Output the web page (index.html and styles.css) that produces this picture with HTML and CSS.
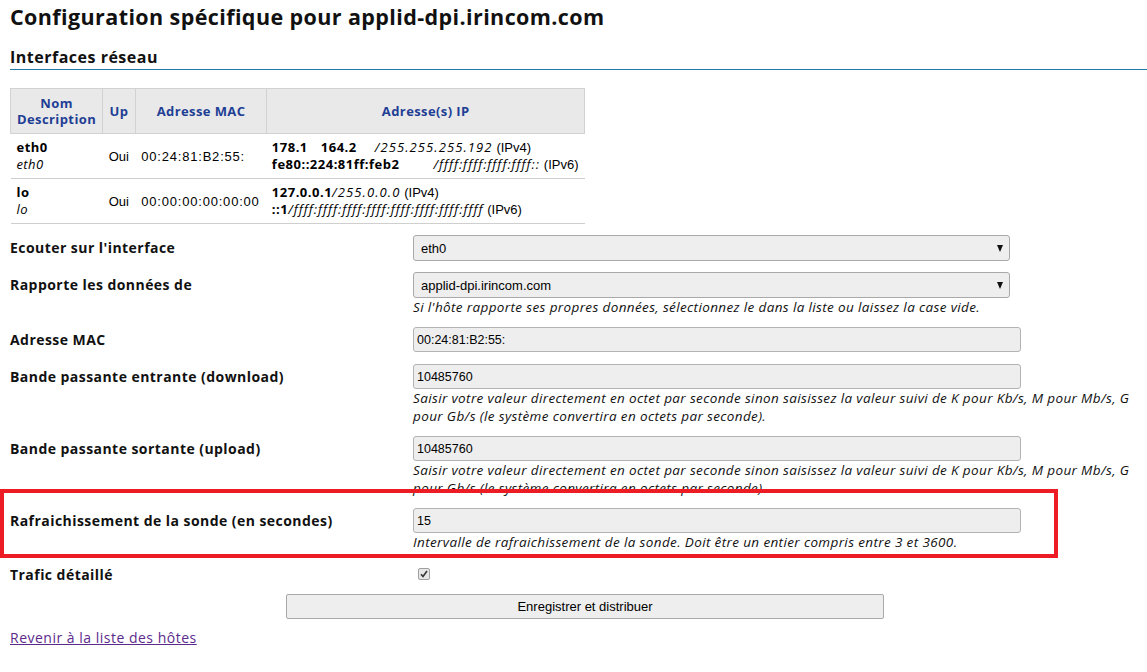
FILE: index.html
```html
<!DOCTYPE html>
<html lang="fr">
<head>
<meta charset="utf-8">
<title>Configuration spécifique</title>
<link rel="stylesheet" href="styles.css">
</head>
<body>
<div class="page">
<h1 class="title">Configuration spécifique pour applid-dpi.irincom.com</h1>
<h2 class="section">Interfaces réseau</h2>

<table class="ifaces">
  <thead>
    <tr>
      <th class="c-name">Nom<br>Description</th>
      <th class="c-up">Up</th>
      <th class="c-mac">Adresse MAC</th>
      <th class="c-ip">Adresse(s) IP</th>
    </tr>
  </thead>
  <tbody>
    <tr>
      <td class="c-name"><b>eth0</b><br><i>eth0</i></td>
      <td class="c-up arial">Oui</td>
      <td class="c-mac arial mac">00:24:81:B2:55:</td>
      <td class="c-ip"><b>178.1<span class="gap g1"></span>164.2<span class="gap g2"></span></b><i>/255.255.255.192</i> <span class="arial">(IPv4)</span><br><b>fe80::224:81ff:feb2<span class="gap g3"></span></b><i class="cond">/ffff:ffff:ffff:ffff::</i> <span class="arial">(IPv6)</span></td>
    </tr>
    <tr>
      <td class="c-name"><b>lo</b><br><i>lo</i></td>
      <td class="c-up arial">Oui</td>
      <td class="c-mac arial mac">00:00:00:00:00:00</td>
      <td class="c-ip"><b>127.0.0.1</b><i>/255.0.0.0</i> <span class="arial">(IPv4)</span><br><b>::1</b><i class="cond">/ffff:ffff:ffff:ffff:ffff:ffff:ffff:ffff</i> <span class="arial">(IPv6)</span></td>
    </tr>
  </tbody>
</table>

<form class="form">
  <div class="row">
    <label class="lbl">Ecouter sur l'interface</label>
    <div class="field">
      <span class="select-wrap"><select class="select"><option>eth0</option></select></span>
    </div>
  </div>
  <div class="row">
    <label class="lbl">Rapporte les données de</label>
    <div class="field">
      <span class="select-wrap"><select class="select"><option>applid-dpi.irincom.com</option></select></span>
      <p class="help">Si l'hôte rapporte ses propres données, sélectionnez le dans la liste ou laissez la case vide.</p>
    </div>
  </div>
  <div class="row">
    <label class="lbl">Adresse MAC</label>
    <div class="field">
      <input class="text" type="text" value="00:24:81:B2:55:">
    </div>
  </div>
  <div class="row">
    <label class="lbl">Bande passante entrante (download)</label>
    <div class="field">
      <input class="text" type="text" value="10485760">
      <p class="help">Saisir votre valeur directement en octet par seconde sinon saisissez la valeur suivi de K pour Kb/s, M pour Mb/s, G pour Gb/s (le système convertira en octets par seconde).</p>
    </div>
  </div>
  <div class="row">
    <label class="lbl">Bande passante sortante (upload)</label>
    <div class="field">
      <input class="text" type="text" value="10485760">
      <p class="help">Saisir votre valeur directement en octet par seconde sinon saisissez la valeur suivi de K pour Kb/s, M pour Mb/s, G pour Gb/s (le système convertira en octets par seconde).</p>
    </div>
  </div>
  <div class="row">
    <label class="lbl">Rafraichissement de la sonde (en secondes)</label>
    <div class="field">
      <input class="text" type="text" value="15">
      <p class="help">Intervalle de rafraichissement de la sonde. Doit être un entier compris entre 3 et 3600.</p>
    </div>
  </div>
  <div class="row row-check">
    <label class="lbl">Trafic détaillé</label>
    <div class="field">
      <span class="check"><svg width="8" height="8" viewBox="0 0 8 8"><path d="M1 4.3 L3 6.5 L7 1" fill="none" stroke="#333" stroke-width="1.6"/></svg></span>
    </div>
  </div>
  <div class="actions">
    <button type="button" class="btn">Enregistrer et distribuer</button>
  </div>
</form>

<a class="back" href="#">Revenir à la liste des hôtes</a>
</div>

<div class="highlight"></div>
</body>
</html>
```

FILE: styles.css
```css
html {
  background: #fff;
}
body {
  margin: 0;
  font-family: "Open Sans", "DejaVu Sans", sans-serif;
  font-size: 13px;
  letter-spacing: 0.4px;
  color: #000;
  position: relative;
  width: 1147px;
  height: 672px;
  overflow: hidden;
}
.page {
  padding-left: 10px;
}
.title {
  margin: 0;
  font-size: 21.5px;
  line-height: 34px;
  font-weight: 700;
  color: #111;
  letter-spacing: 0.4px;
}
.section {
  margin: 12px 0 0 0;
  font-size: 16px;
  line-height: 22px;
  font-weight: 700;
  color: #111;
  letter-spacing: 0.5px;
  padding-bottom: 1px;
  border-bottom: 1px solid #2279a6;
}
.ifaces {
  margin-top: 18px;
  border-collapse: collapse;
  width: 575px;
  font-size: 13px;
}
.ifaces th {
  background: #e9e9e9;
  border: 1px solid #d2d2d2;
  color: #1f3f95;
  font-weight: 700;
  line-height: 16px;
  height: 44px;
  padding: 0 6px;
  text-align: center;
}
.ifaces td {
  border-bottom: 1px solid #cfcfcf;
  line-height: 17px;
  height: 44px;
  padding: 0 6px;
  vertical-align: middle;
  white-space: nowrap;
}
.ifaces th.c-name { width: 78px; }
.ifaces th.c-up { width: 20px; }
.ifaces th.c-mac { width: 120px; }
.ifaces td.c-ip { padding-left: 5px; }
.ifaces b { font-weight: 700; letter-spacing: 0.5px; }
.ifaces td.c-ip i { letter-spacing: 1.1px; }
.ifaces td.c-ip i.cond { letter-spacing: 0.95px; }
.arial {
  font-family: "Liberation Sans", Arial, sans-serif;
  font-size: 13px;
  letter-spacing: 0;
}
.mac {
  letter-spacing: 0.8px;
}
.gap { display: inline-block; }
.g1 { width: 13px; }
.g2 { width: 18px; }
.g3 { width: 34px; }

.form {
  margin-top: 11px;
  display: flex;
  flex-direction: column;
  gap: 11px;
}
.row {
  display: grid;
  grid-template-columns: 403px 1fr;
  align-items: start;
}
.lbl {
  font-weight: 700;
  font-size: 14px;
  line-height: 26px;
  color: #111;
  letter-spacing: 0.45px;
}
.field {
  display: flex;
  flex-direction: column;
  align-items: flex-start;
}
.select-wrap {
  position: relative;
  display: block;
  width: 597px;
}
.select-wrap::after {
  content: "";
  position: absolute;
  right: 7px;
  top: 10px;
  border-left: 3.5px solid transparent;
  border-right: 3.5px solid transparent;
  border-top: 7px solid #111;
  pointer-events: none;
}
.select {
  appearance: none;
  -webkit-appearance: none;
  display: block;
  width: 597px;
  height: 26px;
  box-sizing: border-box;
  border: 1px solid #a9a9a9;
  border-radius: 3px;
  background: #eee;
  font-family: "Liberation Sans", Arial, sans-serif;
  font-size: 13px;
  letter-spacing: 0;
  color: #000;
  padding: 0 7px;
  margin: 0;
}
.text {
  display: block;
  width: 608px;
  height: 25px;
  box-sizing: border-box;
  border: 1px solid #b3b3b3;
  border-radius: 3px;
  background: #eee;
  font-family: "Liberation Sans", Arial, sans-serif;
  font-size: 12.5px;
  letter-spacing: 0;
  color: #000;
  padding: 0 3px;
  margin: 0;
}
.help {
  margin: 0;
  font-style: italic;
  font-size: 13.5px;
  letter-spacing: 0.37px;
  line-height: 18px;
  color: #111;
  width: 724px;
}
.row-check {
  margin-top: 2px;
}
.row-check .lbl {
  line-height: 22px;
}
.check {
  display: flex;
  align-items: center;
  justify-content: center;
  width: 10px;
  height: 10px;
  margin: 4px 0 0 5px;
  border: 1px solid #a0a0a0;
  border-radius: 2px;
  background: #e6e6e6;
}
.actions {
  padding-left: 276px;
  margin-top: -3px;
}
.btn {
  display: block;
  width: 598px;
  height: 25px;
  border: 1px solid #a9a9a9;
  border-radius: 2px;
  background: #eee;
  font-family: "Liberation Sans", Arial, sans-serif;
  font-size: 13px;
  letter-spacing: 0;
  color: #000;
  padding: 0;
}
.back {
  display: inline-block;
  margin-top: 9px;
  font-size: 14px;
  line-height: 20px;
  letter-spacing: 0.5px;
  color: #5b2b8c;
  text-decoration: underline;
}
.highlight {
  position: absolute;
  left: 0;
  top: 489px;
  width: 1050px;
  height: 61px;
  border: 4px solid #ed1c24;
  pointer-events: none;
}
```
